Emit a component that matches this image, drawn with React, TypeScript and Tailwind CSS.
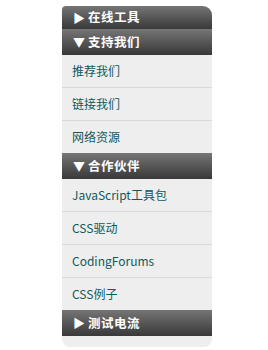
import React from "react";

const font = { fontFamily: '"Noto Sans CJK SC", "Liberation Sans", sans-serif' };

function Header({ open, label, first }: { open: boolean; label: string; first?: boolean }) {
  return (
    <div
      className={`flex items-center pl-[11px] bg-gradient-to-b from-[#767676] to-[#393939] text-white font-bold text-[12.5px] tracking-[0.5px] ${first ? "h-[23px] rounded-tl-[4px] rounded-tr-[9px]" : "h-[26px]"}`}
    >
      <span className="text-[12px] w-[15px] leading-none">{open ? "▼" : "▶"}</span>
      <span>{label}</span>
    </div>
  );
}

function Item({ label, last }: { label: string; last?: boolean }) {
  return (
    <div className={`h-[32px] flex items-center pl-[10px] text-[12px] text-[#0e5a5a] bg-[#eeeeee] ${last ? "" : "border-b border-[#d9d9d9] h-[33px]"}`}>
      {label}
    </div>
  );
}

export default function App() {
  return (
    <div className="w-[268px] h-[350px] bg-white pt-[6px] pl-[62px]" style={font}>
      <div className="w-[150px] flex flex-col">
        <Header open={false} label="在线工具" first />
        <Header open label="支持我们" />
        <Item label="推荐我们" />
        <Item label="链接我们" />
        <Item label="网络资源" last />
        <Header open label="合作伙伴" />
        <Item label="JavaScript工具包" />
        <Item label="CSS驱动" />
        <Item label="CodingForums" />
        <Item label="CSS例子" last />
        <Header open={false} label="测试电流" />
        <div className="h-[11px] bg-[#eeeeee] rounded-b-[8px]"></div>
      </div>
    </div>
  );
}
